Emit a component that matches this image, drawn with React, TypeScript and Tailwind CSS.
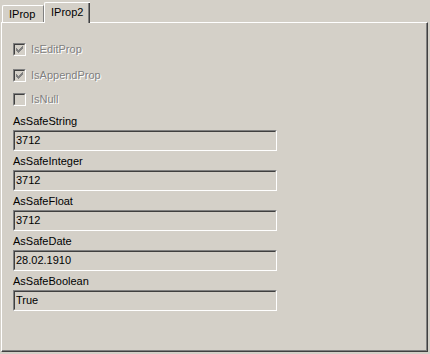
const FONT = { fontFamily: '"Liberation Sans", Arial, sans-serif' };

// classic 7x7 check glyph, one string per row
const CHECK = ['......x', '.....xx', 'x...xxx', 'xx.xxx.', 'xxxxx..', '.xxx...', '..x....'];

function Check({ checked, label }: { checked: boolean; label: string }) {
  return (
    <div className="flex items-center h-[13px] gap-[5px]">
      <div className="w-[13px] h-[13px] border border-t-[#808080] border-l-[#808080] border-b-white border-r-white">
        <div className="w-full h-full border border-t-[#404040] border-l-[#404040] border-b-[#d4d0c8] border-r-[#d4d0c8] bg-[#d4d0c8] flex items-center justify-center">
          {checked && (
            <svg width="7" height="7" viewBox="0 0 7 7" shapeRendering="crispEdges">
              {CHECK.flatMap((row, y) =>
                row.split('').map((c, x) =>
                  c === 'x' ? <rect key={`${x}-${y}`} x={x} y={y} width="1" height="1" fill="#808080" /> : null
                )
              )}
            </svg>
          )}
        </div>
      </div>
      <span className="text-[11px] leading-[13px] text-[#808080] [text-shadow:1px_1px_0_#fff]">{label}</span>
    </div>
  );
}

function Field({ label, value }: { label: string; value: string }) {
  return (
    <div className="flex flex-col mb-[4px]">
      <div className="text-[11px] leading-[13px] text-black mb-[2px]">{label}</div>
      <div className="w-[264px] h-[21px] border border-t-[#808080] border-l-[#808080] border-b-white border-r-white">
        <div className="w-full h-full border border-t-[#404040] border-l-[#404040] border-b-[#d4d0c8] border-r-[#d4d0c8] bg-[#d4d0c8] pl-[1px] flex items-center">
          <span className="text-[11px] leading-[13px] text-black">{value}</span>
        </div>
      </div>
    </div>
  );
}

export default function App() {
  return (
    <div className="w-[430px] h-[354px] bg-[#d4d0c8] flex flex-col" style={FONT}>
      {/* Tabs */}
      <div className="h-[22px] flex items-end pl-[2px]">
        <div className="w-[42px] h-[17px] border-l border-t border-r border-l-white border-t-white border-r-[#808080] rounded-tl-[2px] pl-[6px] pt-[2px] text-[11px] leading-[13px] text-black">
          IProp
        </div>
        <div className="relative z-10 w-[46px] h-[21px] -mb-px border-l border-t border-l-white border-t-white rounded-tl-[2px] bg-[#d4d0c8] flex">
          <div className="flex-1 border-r border-r-[#808080] pl-[6px] pt-[3px] text-[11px] leading-[13px] text-black">IProp2</div>
          <div className="w-px bg-[#404040]" />
        </div>
      </div>

      {/* Panel */}
      <div className="ml-px w-[427px] h-[330px] border-l border-t border-r border-b border-l-white border-t-white border-r-[#404040] border-b-[#404040]">
        <div className="w-full h-full border-r border-b border-r-[#808080] border-b-[#808080] pl-[11px] pt-[20px]">
          <div className="flex flex-col">
            <Check checked label="IsEditProp" />
            <div className="h-[13px]" />
            <Check checked label="IsAppendProp" />
            <div className="h-[11px]" />
            <Check checked={false} label="IsNull" />
            <div className="h-[9px]" />
          </div>
          <Field label="AsSafeString" value="3712" />
          <Field label="AsSafeInteger" value="3712" />
          <Field label="AsSafeFloat" value="3712" />
          <Field label="AsSafeDate" value="28.02.1910" />
          <Field label="AsSafeBoolean" value="True" />
        </div>
      </div>
    </div>
  );
}
